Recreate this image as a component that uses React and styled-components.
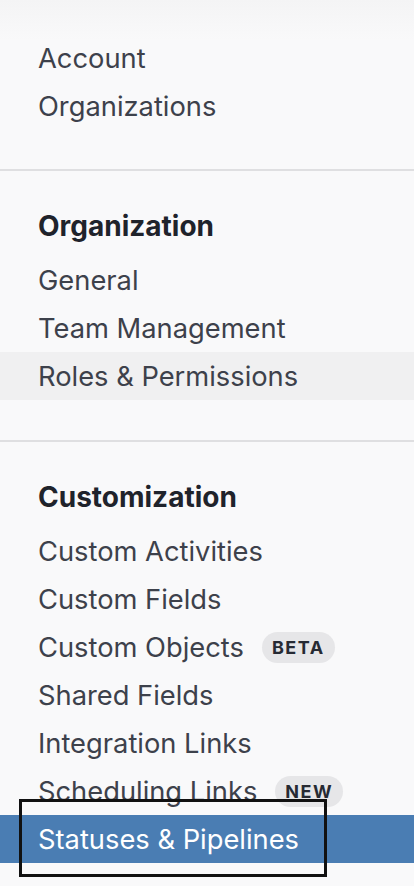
import React from "react";
import styled, { createGlobalStyle } from "styled-components";

const GlobalStyle = createGlobalStyle`
  html, body {
    margin: 0;
    padding: 0;
    background: #f9f9fa;
  }
  body {
    font-family: Inter, "Noto Sans", "Liberation Sans", sans-serif;
    -webkit-font-smoothing: antialiased;
  }
`;

const Page = styled.nav`
  position: relative;
  width: 414px;
  height: 886px;
  overflow: hidden;
  background: linear-gradient(#f4f4f5 0px, #f9f9fa 40px);
`;

const Section = styled.div`
  display: flex;
  flex-direction: column;
  padding: ${(p) => (p.$first ? "34px 0 39px" : "31px 0 40px")};
  border-bottom: ${(p) => (p.$last ? "none" : "2px solid #dfdfe1")};
`;

const Heading = styled.div`
  height: 48px;
  display: flex;
  align-items: center;
  padding-left: 38px;
  margin-bottom: 6px;
  font-size: 28px;
  font-weight: 700;
  color: #1f232b;
`;

const Item = styled.a`
  height: 48px;
  display: flex;
  align-items: center;
  gap: 18px;
  padding-left: 38px;
  font-size: 27.3px;
  color: ${(p) => (p.$selected ? "#ffffff" : "#3d414b")};
  background: ${(p) =>
    p.$selected ? "#4a7db3" : p.$hover ? "#f0f0f1" : "transparent"};
  text-decoration: none;
  cursor: pointer;
`;

const Badge = styled.span`
  display: inline-flex;
  align-items: center;
  height: 31px;
  padding: 0 10px;
  border-radius: 16px;
  background: #e6e6e8;
  color: #262a33;
  font-size: 18px;
  font-weight: 700;
  letter-spacing: 1.5px;
`;

const FocusRing = styled.div`
  position: absolute;
  left: 19px;
  top: 799px;
  width: 302px;
  height: 72px;
  border: 3px solid #111;
  pointer-events: none;
`;

const sections = [
  {
    items: [{ label: "Account" }, { label: "Organizations" }],
  },
  {
    title: "Organization",
    items: [
      { label: "General" },
      { label: "Team Management" },
      { label: "Roles & Permissions", hover: true },
    ],
  },
  {
    title: "Customization",
    items: [
      { label: "Custom Activities" },
      { label: "Custom Fields" },
      { label: "Custom Objects", badge: "BETA" },
      { label: "Shared Fields" },
      { label: "Integration Links" },
      { label: "Scheduling Links", badge: "NEW" },
      { label: "Statuses & Pipelines", selected: true },
    ],
  },
];

export default function App() {
  return (
    <>
      <GlobalStyle />
      <Page>
        {sections.map((section, i) => (
          <Section
            key={i}
            $first={i === 0}
            $last={i === sections.length - 1}
          >
            {section.title && <Heading>{section.title}</Heading>}
            {section.items.map((item) => (
              <Item
                key={item.label}
                $selected={item.selected}
                $hover={item.hover}
              >
                {item.label}
                {item.badge && <Badge>{item.badge}</Badge>}
              </Item>
            ))}
          </Section>
        ))}
        <FocusRing />
      </Page>
    </>
  );
}
